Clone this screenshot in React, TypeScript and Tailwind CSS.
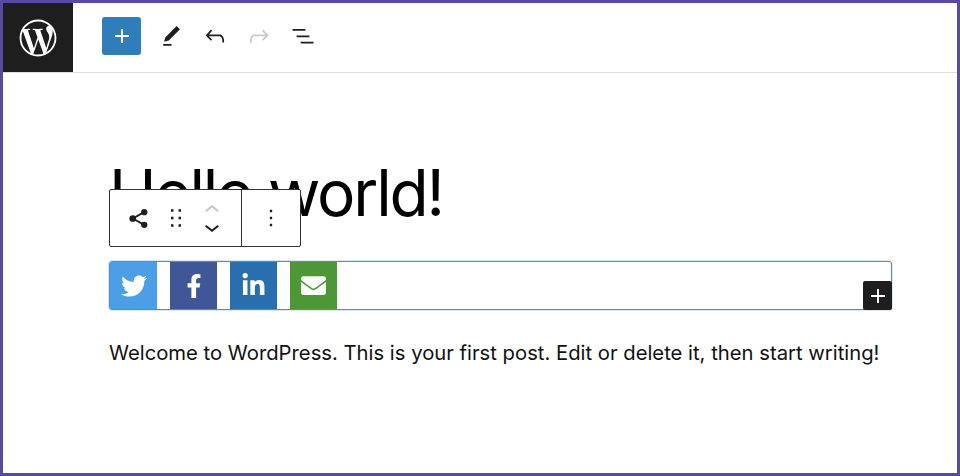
import { FaWordpressSimple, FaTwitter, FaFacebookF, FaLinkedinIn, FaEnvelope } from "react-icons/fa"

const Glyph = ({ d, className }: { d: string; className?: string }) => (
  <svg viewBox="0 0 24 24" fill="currentColor" className={className}>
    <path d={d} />
  </svg>
)

const PLUS = "M18 11.2h-5.2V6h-1.6v5.2H6v1.6h5.2V18h1.6v-5.2H18z"
const PEN = "M20.1 5.1L16.9 2 6.2 12.7l-1.3 4.4 4.5-1.3L20.1 5.1zM4 20.8h8v-1.5H4v1.5z"
const UNDO = "M18.3 11.7c-.6-.6-1.4-.9-2.3-.9H6.7l2.9-3.3-1.1-1-4.5 5L8.5 16l1-1-2.7-2.7H16c.5 0 .9.2 1.3.5 1 1 1 3.4 1 4.5v.3h1.5v-.2c0-1.5 0-4.3-1.5-5.7z"
const REDO = "M15.6 6.5l-1.1 1 2.9 3.3H8c-.9 0-1.7.3-2.3.9-1.4 1.5-1.4 4.2-1.4 5.6v.2h1.5v-.3c0-1.1 0-3.5 1-4.5.3-.3.7-.5 1.3-.5h9.2L14.5 15l1.1 1.1 4.6-4.6-4.6-5z"
const LIST = "M3 6h11v1.5H3V6zm3.5 5.5h11V13h-11v-1.5zM21 17H10v1.5h11V17z"
const DRAG = "M8 7h2V5H8v2zm0 6h2v-2H8v2zm0 6h2v-2H8v2zm6-14v2h2V5h-2zm0 8h2v-2h-2v2zm0 6h2v-2h-2v2z"
const MORE = "M13 19h-2v-2h2v2zm0-6h-2v-2h2v2zm0-6h-2V5h2v2z"
const UP = "M6.5 12.4L12 8l5.5 4.4-.9 1.2L12 10l-4.5 3.6-1-1.2z"
const DOWN = "M17.5 11.6L12 16l-5.5-4.4.9-1.2L12 14l4.5-3.6 1 1.2z"

const BlockToolbar = () => (
  <div className="absolute left-0 top-[-72px] flex h-[58px] w-[192px] rounded-[2px] border border-[#333] bg-white text-[#1e1e1e]">
    <div className="flex w-[132px] items-center border-r border-[#333] pl-[10px]">
      <div className="flex w-[37px] justify-center">
        <svg viewBox="0 0 20 20" width="21" height="21" fill="currentColor">
          <circle cx="15.5" cy="4" r="3" />
          <circle cx="4.5" cy="10" r="3.2" />
          <circle cx="15.5" cy="16" r="3" />
          <path d="M4.5 10L15.5 4M4.5 10l11 6" stroke="currentColor" strokeWidth="1.8" fill="none" />
        </svg>
      </div>
      <div className="flex w-[37px] justify-center">
        <Glyph d={DRAG} className="h-[30px] w-[30px]" />
      </div>
      <div className="flex w-[36px] flex-col items-center">
        <Glyph d={UP} className="h-[30px] w-[30px] text-[#c4c4c4]" />
        <Glyph d={DOWN} className="mt-[-13px] h-[30px] w-[30px]" />
      </div>
    </div>
    <div className="flex flex-1 items-center justify-center">
      <Glyph d={MORE} className="h-7 w-7" />
    </div>
  </div>
)

const ShareTile = ({ color, children }: { color: string; children: React.ReactNode }) => (
  <div className={`flex h-full w-[47px] items-center justify-center text-white ${color}`}>{children}</div>
)

export default function App() {
  return (
    <div className="h-[476px] w-[960px] overflow-hidden border-[3px] border-[#5a4a9e] bg-white font-['Inter',sans-serif] text-black">
      <header className="box-content flex h-[69px] items-center border-b border-[#e0e0e0]">
        <div className="flex h-[69px] w-[70px] items-center justify-center bg-[#1e1e1e] text-white">
          <FaWordpressSimple size={38} />
        </div>
        <button className="mb-[3px] ml-[29px] flex h-[38px] w-[39px] items-center justify-center rounded-[3px] bg-[#2f7ebb] text-white">
          <Glyph d={PLUS} className="h-7 w-7" />
        </button>
        <div className="mb-[3px] ml-[8px] flex items-center text-[#1e1e1e]">
          <div className="flex w-[44px] justify-center"><Glyph d={PEN} className="h-[25px] w-[25px]" /></div>
          <div className="flex w-[44px] justify-center"><Glyph d={UNDO} className="h-7 w-7" /></div>
          <div className="flex w-[44px] justify-center"><Glyph d={REDO} className="h-7 w-7 text-[#c9c9c9]" /></div>
          <div className="flex w-[44px] justify-center"><Glyph d={LIST} className="h-7 w-7" /></div>
        </div>
      </header>

      <main className="px-[106px] pt-[81px]">
        <h1 className="text-[64px] leading-[78px] font-normal tracking-[-2.2px]">Hello world!</h1>
        <div className="relative mt-[29px]">
          <BlockToolbar />
          <div className="relative flex h-[49px] w-[783px] gap-[13px] rounded-[3px] border border-[#4a92c4] shadow-[0_0_0_1px_#4a92c433]">
            <ShareTile color="bg-[#4c9fe6]"><FaTwitter size={26} /></ShareTile>
            <ShareTile color="bg-[#3f5797]"><FaFacebookF size={24} /></ShareTile>
            <ShareTile color="bg-[#2a6fad]"><FaLinkedinIn size={25} /></ShareTile>
            <ShareTile color="bg-[#4d9736]"><FaEnvelope size={25} /></ShareTile>
            <div className="absolute right-[-1px] bottom-[-1px] flex h-[29px] w-[29px] items-center justify-center rounded-[2px] bg-[#1e1e1e] text-white">
              <Glyph d={PLUS} className="h-7 w-7" />
            </div>
          </div>
        </div>
        <p className="mt-[25px] whitespace-nowrap text-[20.25px] leading-[36px] text-[#111]">
          Welcome to WordPress. This is your first post. Edit or delete it, then start writing!
        </p>
      </main>
    </div>
  )
}
